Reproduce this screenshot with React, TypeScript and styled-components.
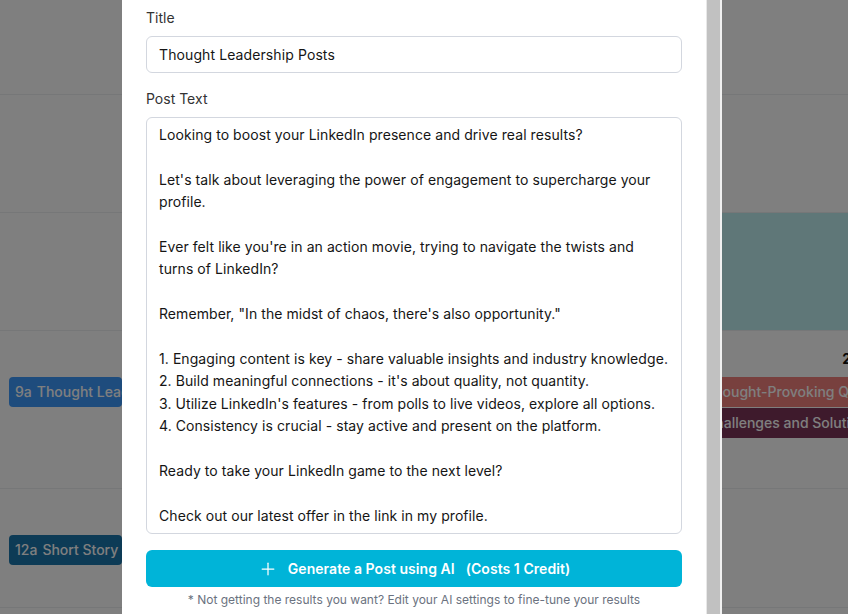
import styled, { createGlobalStyle } from "styled-components";
import { Plus } from "lucide-react";

const GlobalStyle = createGlobalStyle`
  html, body {
    margin: 0;
    padding: 0;
    overflow: hidden;
    background: #fff;
  }
  body {
    font-family: Inter, "Noto Sans", sans-serif;
  }
  * {
    box-sizing: border-box;
  }
`;

/* ---------- calendar behind the modal ---------- */

const Calendar = styled.div`
  width: 868px;
  height: 614px;
  display: grid;
  grid-template-columns: 130px 560px 178px;
  grid-template-rows: 94px 118px 118px 158px 119px 1fr;
  background: #fff;
`;

const Cell = styled.div<{ $today?: boolean; $first?: boolean }>`
  border-top: ${(p) => (p.$first ? "none" : "1px solid #eceef1")};
  background: ${(p) => (p.$today ? "#beeef0" : "transparent")};
  padding: 18px 8px 0 9px;
  display: flex;
  flex-direction: column;
  gap: 1px;
  min-width: 0;
  overflow: hidden;
`;

const DayNum = styled.div`
  height: 20px;
  line-height: 20px;
  margin-bottom: 7px;
  text-align: right;
  font-size: 14px;
  font-weight: 700;
  color: #111;
`;

const Event = styled.div<{ $color: string }>`
  height: 30px;
  line-height: 30px;
  padding: 0 6px;
  border-radius: 4px;
  background: ${(p) => p.$color};
  color: #fff;
  font-size: 14px;
  font-weight: 500;
  white-space: nowrap;
  overflow: hidden;
`;

const Time = styled.span`
  margin-right: 5px;
`;

/* ---------- modal ---------- */

const Overlay = styled.div`
  position: fixed;
  inset: 0;
  background: rgba(0, 0, 0, 0.5);
  display: flex;
  justify-content: center;
  padding-right: 4px;
`;

const Panel = styled.div`
  width: 600px;
  height: 100%;
  display: flex;
  background: #fff;
`;

const Body = styled.div`
  flex: 1;
  padding: 8px 24px 0 24px;
  display: flex;
  flex-direction: column;
`;

const ScrollTrack = styled.div`
  width: 16px;
  background: #f1f1f1;
  border-left: 1px solid #e8e8e8;
  padding-right: 2px;
  display: flex;
`;

const Thumb = styled.div`
  flex: 1;
  background: #c1c1c1;
`;

const Label = styled.label`
  display: block;
  font-size: 14px;
  line-height: 20px;
  color: #333;
  margin-bottom: 8px;
`;

const TextInput = styled.input`
  width: 100%;
  height: 37px;
  border: 1px solid #d3d7df;
  border-radius: 6px;
  padding: 0 12px;
  font-family: inherit;
  font-size: 14px;
  letter-spacing: 0.1px;
  color: #151515;
  margin-bottom: 16px;
  outline: none;
`;

const TextArea = styled.textarea`
  width: 100%;
  height: 417px;
  border: 1px solid #d3d7df;
  border-radius: 6px;
  padding: 6px 12px 5px;
  font-family: inherit;
  font-size: 14px;
  line-height: 22.4px;
  letter-spacing: 0.07px;
  color: #151515;
  white-space: pre;
  overflow: hidden;
  resize: none;
  outline: none;
`;

const GenerateButton = styled.button`
  margin-top: 16px;
  width: 100%;
  height: 37px;
  border: none;
  border-radius: 6px;
  background: #00b4d8;
  color: #fff;
  font-family: inherit;
  font-size: 14px;
  font-weight: 600;
  letter-spacing: 0.05px;
  display: flex;
  align-items: center;
  justify-content: center;
  gap: 10px;
  cursor: pointer;
`;

const Cost = styled.span`
  margin-left: 11px;
`;

const Hint = styled.div`
  margin-top: 5px;
  font-size: 12px;
  line-height: 16px;
  color: #6b7280;
  text-align: center;
`;

const POST_TEXT = `Looking to boost your LinkedIn presence and drive real results?

Let's talk about leveraging the power of engagement to supercharge your
profile.

Ever felt like you're in an action movie, trying to navigate the twists and
turns of LinkedIn?

Remember, "In the midst of chaos, there's also opportunity."

1. Engaging content is key - share valuable insights and industry knowledge.
2. Build meaningful connections - it's about quality, not quantity.
3. Utilize LinkedIn's features - from polls to live videos, explore all options.
4. Consistency is crucial - stay active and present on the platform.

Ready to take your LinkedIn game to the next level?

Check out our latest offer in the link in my profile.`;

type Ev = { time?: string; title: string; color: string };
type Row = { left: Ev[]; right: Ev[]; day?: string; today?: boolean };

const rows: Row[] = [
  { left: [], right: [] },
  { left: [], right: [] },
  { left: [], right: [], today: true },
  {
    left: [{ time: "9a", title: "Thought Leadership Posts", color: "#3d99fb" }],
    right: [
      { title: "Thought-Provoking Questions", color: "#f0807c" },
      { title: "Challenges and Solutions", color: "#7c3458" },
    ],
    day: "23",
  },
  {
    left: [{ time: "12a", title: "Short Story", color: "#1a76ad" }],
    right: [],
  },
  { left: [], right: [] },
];

function Events({ list }: { list: Ev[] }) {
  return (
    <>
      {list.map((e) => (
        <Event key={e.title} $color={e.color}>
          {e.time && <Time>{e.time}</Time>}
          {e.title}
        </Event>
      ))}
    </>
  );
}

export default function App() {
  return (
    <>
      <GlobalStyle />
      <Calendar>
        {rows.map((r, i) => [
          <Cell key={`l${i}`} $first={i === 0}>
            <DayNum>&nbsp;</DayNum>
            <Events list={r.left} />
          </Cell>,
          <Cell key={`m${i}`} $first={i === 0} />,
          <Cell key={`r${i}`} $first={i === 0} $today={r.today}>
            <DayNum>{r.day ?? "\u00a0"}</DayNum>
            <Events list={r.right} />
          </Cell>,
        ])}
      </Calendar>

      <Overlay>
        <Panel>
          <Body>
            <Label>Title</Label>
            <TextInput defaultValue="Thought Leadership Posts" />
            <Label>Post Text</Label>
            <TextArea wrap="off" defaultValue={POST_TEXT} />
            <GenerateButton>
              <Plus size={20} strokeWidth={1.5} />
              <span>
                Generate a Post using AI<Cost>(Costs 1 Credit)</Cost>
              </span>
            </GenerateButton>
            <Hint>
              * Not getting the results you want? Edit your AI settings to
              fine-tune your results
            </Hint>
          </Body>
          <ScrollTrack>
            <Thumb />
          </ScrollTrack>
        </Panel>
      </Overlay>
    </>
  );
}
